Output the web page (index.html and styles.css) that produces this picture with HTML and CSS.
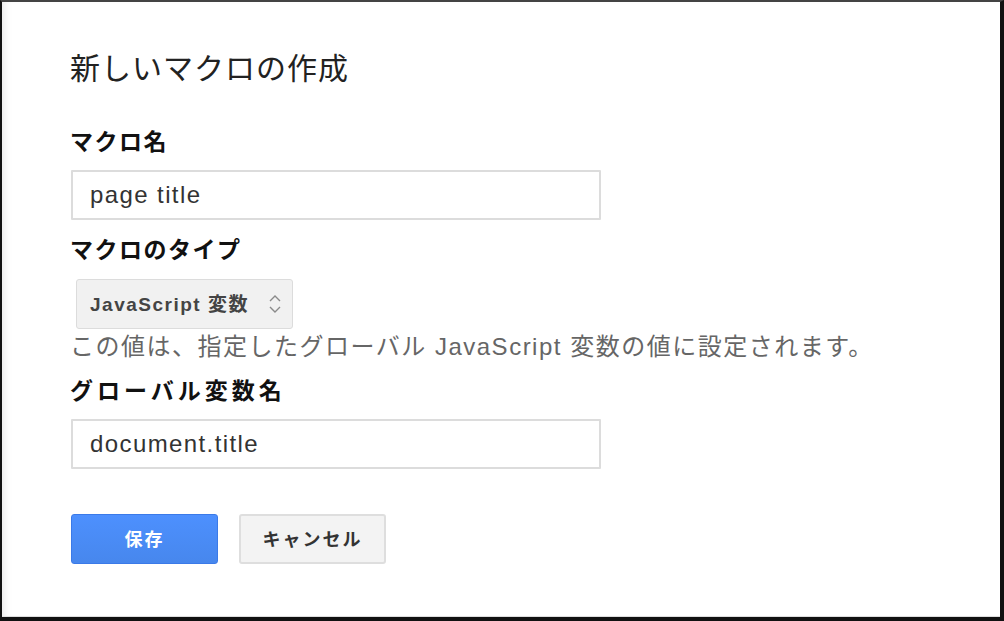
FILE: index.html
```html
<!DOCTYPE html>
<html lang="ja">
<head>
  <meta charset="UTF-8" />
  <title>新しいマクロの作成</title>
  <link rel="stylesheet" href="styles.css">
</head>
<body>
  <div class="frame">
    <h1 class="title">新しいマクロの作成</h1>
    <form class="macro-form" onsubmit="return false">
      <label class="label label-name" for="macroName">マクロ名</label>
      <input id="macroName" class="text-input" type="text" value="page title" />

      <label class="label label-type">マクロのタイプ</label>
      <div class="select">
        <span class="select-text">JavaScript 変数</span>
        <svg class="select-arrows" width="14" height="22" viewBox="0 0 14 22" aria-hidden="true">
          <path d="M2 8 L7 3 L12 8" fill="none" stroke="#8a8a8a" stroke-width="1.4" />
          <path d="M2 14 L7 19 L12 14" fill="none" stroke="#8a8a8a" stroke-width="1.4" />
        </svg>
      </div>
      <div class="help">この値は、指定したグローバル JavaScript 変数の値に設定されます。</div>

      <label class="label label-var" for="varName">グローバル変数名</label>
      <input id="varName" class="text-input" type="text" value="document.title" />

      <div class="actions">
        <button type="submit" class="btn btn-save">保存</button>
        <button type="button" class="btn btn-cancel">キャンセル</button>
      </div>
    </form>
  </div>
</body>
</html>
```

FILE: styles.css
```css
body {
  margin: 0;
  background: #fff;
  font-family: "Liberation Sans", "Noto Sans CJK JP", sans-serif;
  color: #222;
}
.frame {
  box-sizing: border-box;
  width: 1004px;
  height: 621px;
  background: #fff;
  border-top: 2px solid #444;
  border-left: 2px solid #111;
  border-right: 4px solid #111;
  border-bottom: 4px solid #111;
  box-shadow: inset 8px 0 8px -6px #e6e6e6, inset 0 -1px 0 #ddd;
  padding: 49px 0 0 68px;
}
.title {
  margin: 0;
  font-size: 30px;
  line-height: 36px;
  font-weight: normal;
  letter-spacing: 1px;
  color: #222;
}
.macro-form {
  display: flex;
  flex-direction: column;
  align-items: flex-start;
}
.label {
  font-size: 23px;
  line-height: 28px;
  font-weight: bold;
  letter-spacing: 1.5px;
  color: #111;
}
.label-name {
  margin-top: 41px;
}
.label-type {
  margin-top: 16px;
}
.label-var {
  margin-top: 16px;
  letter-spacing: 4px;
}
.text-input {
  box-sizing: border-box;
  width: 530px;
  height: 50px;
  margin: 14px 0 0 1px;
  padding: 0 17px;
  border: 2px solid #dcdcdc;
  border-radius: 1px;
  font-family: inherit;
  font-size: 24px;
  letter-spacing: 1.4px;
  color: #333;
  background: #fff;
  outline: none;
}
.select {
  box-sizing: border-box;
  width: 217px;
  height: 50px;
  margin: 15px 0 0 6px;
  padding: 0 10px 4px 13px;
  display: flex;
  align-items: center;
  justify-content: space-between;
  background: #f1f1f1;
  border: 1px solid #dcdcdc;
  border-radius: 3px;
}
.select-text {
  font-size: 19px;
  font-weight: bold;
  letter-spacing: 1.5px;
  color: #444;
}
.select-arrows {
  margin-top: 4px;
}
.help {
  margin-top: 4px;
  font-size: 24px;
  line-height: 28px;
  letter-spacing: 1.5px;
  color: #666;
  white-space: nowrap;
}
.actions {
  display: flex;
  gap: 21px;
  margin: 45px 0 0 1px;
}
.btn {
  box-sizing: border-box;
  width: 147px;
  height: 50px;
  padding: 0 0 3px;
  border-radius: 3px;
  font-family: inherit;
  font-size: 18px;
  font-weight: bold;
  letter-spacing: 2px;
  cursor: pointer;
}
.btn-save {
  background: linear-gradient(#4d90fe, #4787ed);
  border: 1px solid #3b7ae8;
  color: #fff;
}
.btn-cancel {
  background: #f3f3f3;
  border: 2px solid #dedede;
  color: #333;
}
```
